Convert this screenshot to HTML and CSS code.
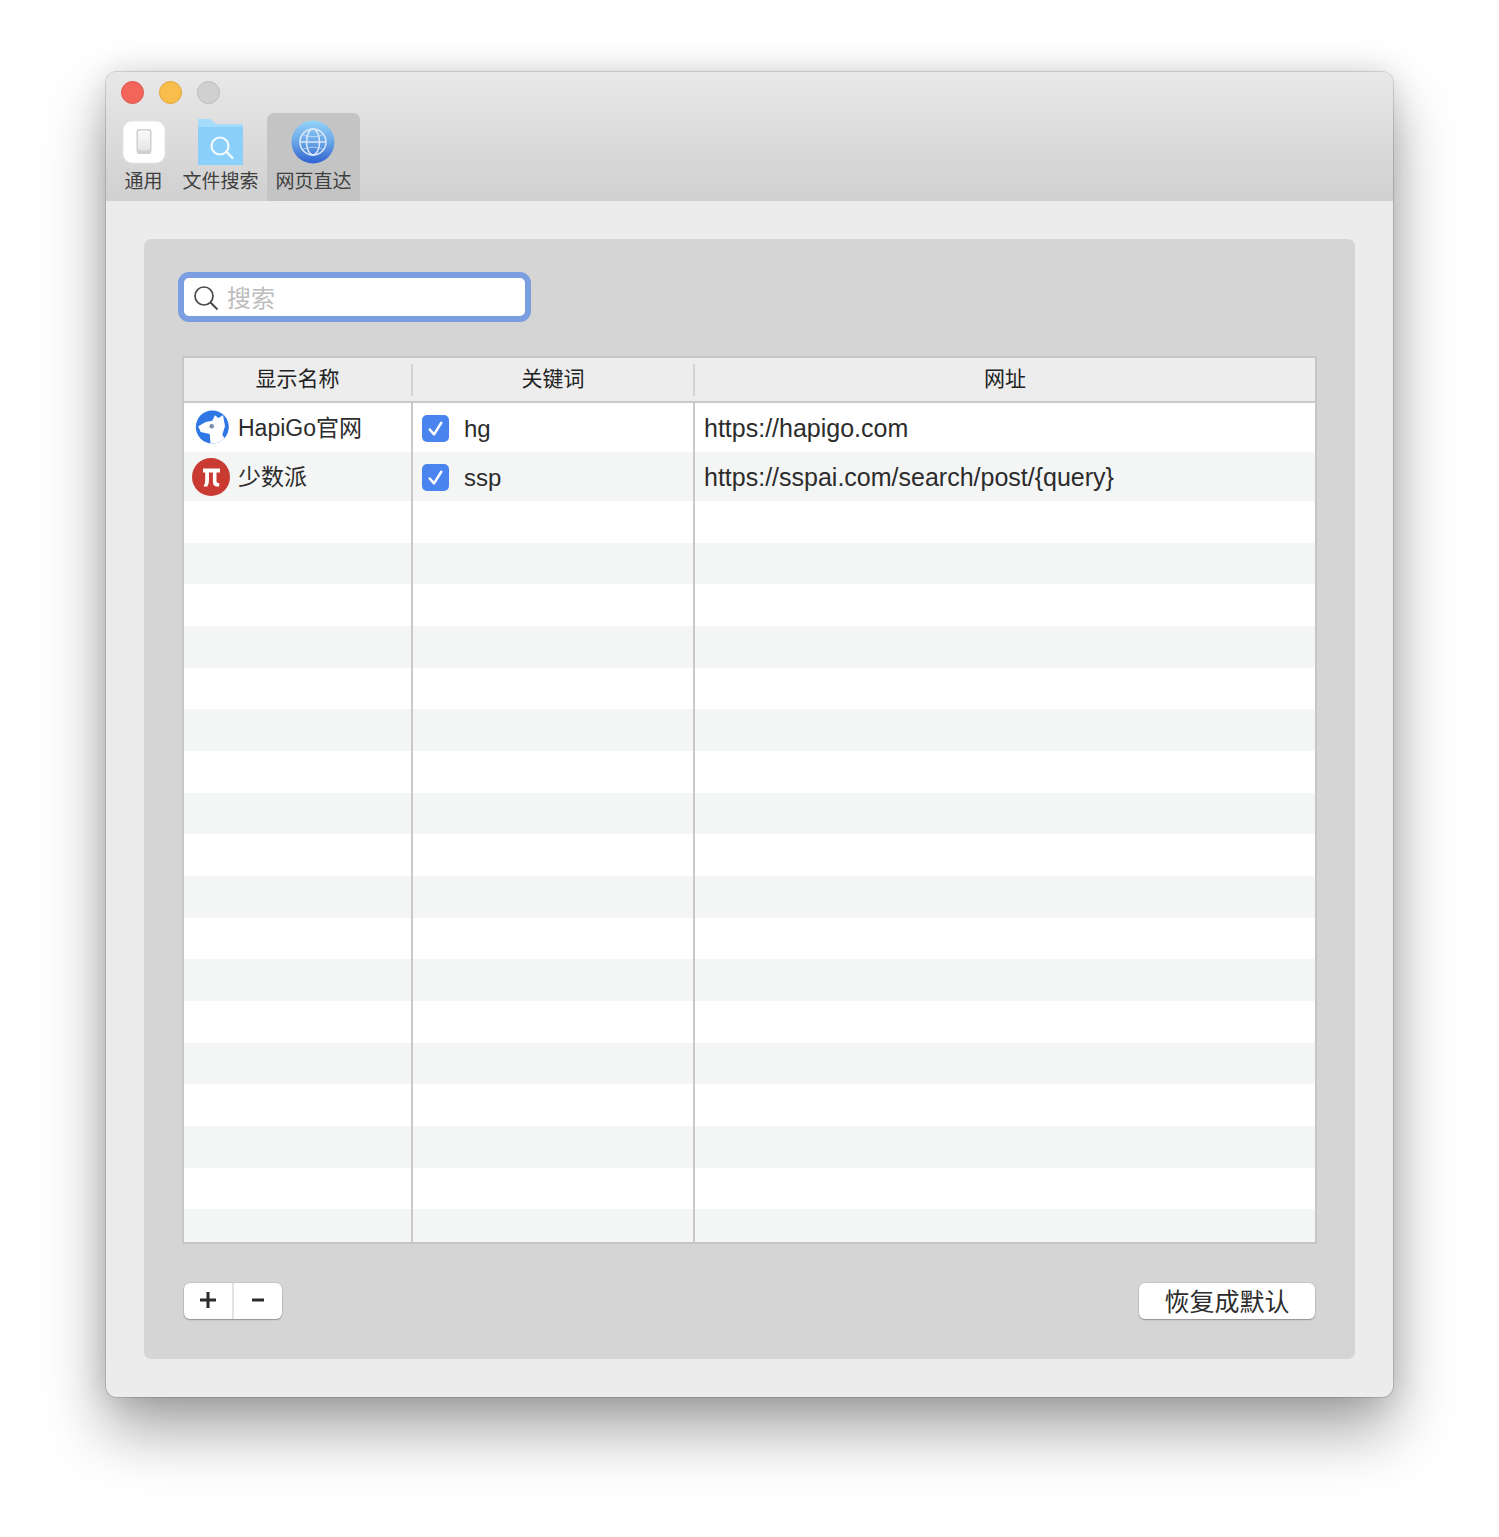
FILE: index.html
```html
<!DOCTYPE html>
<html lang="zh">
<head>
<meta charset="utf-8">
<title>HapiGo</title>
<link rel="stylesheet" href="styles.css">
</head>
<body>
<main class="window">
  <header class="titlebar">
    <div class="lights">
      <span class="light red"></span>
      <span class="light yellow"></span>
      <span class="light gray"></span>
    </div>
    <nav class="tabs">
      <div class="tab tab-general">
        <svg class="tab-icon" width="44" height="44" viewBox="0 0 44 44">
          <defs><linearGradient id="sw" x1="0" y1="0" x2="0" y2="1"><stop offset="0" stop-color="#fbfbfb"/><stop offset="1" stop-color="#e4e4e4"/></linearGradient></defs>
          <rect x="1" y="1" width="42" height="42" rx="9" fill="#fff" stroke="#e6e6e6"/>
          <rect x="14.500" y="9" width="15" height="25" rx="3" fill="#cfcfcf"/>
          <rect x="16" y="10.500" width="12" height="20" rx="2" fill="url(#sw)"/>
        </svg>
        <span>通用</span>
      </div>
      <div class="tab tab-files">
        <svg class="tab-icon" width="45" height="46" viewBox="0 0 45 46">
          <path d="M0 0h11l7 5h27v41H0z" fill="#8ad0fb"/>
          <path d="M0 0h11l7 5h27v3H0z" fill="#a5dcfc"/>
          <circle cx="22" cy="27" r="8.500" fill="none" stroke="#f2fafe" stroke-width="2.200"/>
          <path d="M28.500 33l6 6" stroke="#f2fafe" stroke-width="2.400" stroke-linecap="round"/>
        </svg>
        <span>文件搜索</span>
      </div>
      <div class="tab tab-web">
        <svg class="tab-icon" width="44" height="44" viewBox="0 0 44 44">
          <defs><linearGradient id="gl" x1="0" y1="0" x2="0" y2="1"><stop offset="0" stop-color="#93d3f8"/><stop offset=".5" stop-color="#6aa5e6"/><stop offset="1" stop-color="#2f62d2"/></linearGradient></defs>
          <circle cx="22" cy="22" r="21.500" fill="url(#gl)"/>
          <g fill="none" stroke="#d9e9f9" stroke-width="1.500">
            <circle cx="22" cy="22" r="13"/>
            <ellipse cx="22" cy="22" rx="6.500" ry="13"/>
            <path d="M9 22h26"/>
            <path d="M12 14.500c5 3 15 3 20 0M12 29.500c5 -3 15 -3 20 0" stroke-width="1" stroke-opacity=".7"/>
          </g>
        </svg>
        <span>网页直达</span>
      </div>
    </nav>
  </header>
  <section class="content">
    <div class="panel">
      <div class="search">
        <svg width="26" height="26" viewBox="0 0 26 26">
          <circle cx="11" cy="11" r="9" fill="none" stroke="#4a4a4a" stroke-width="1.700"/>
          <path d="M17.500 17.500l7 7" stroke="#4a4a4a" stroke-width="1.900"/>
        </svg>
        <span class="placeholder">搜索</span>
      </div>
      <div class="table">
        <div class="thead">
          <div class="th">显示名称</div>
          <div class="th">关键词</div>
          <div class="th last">网址</div>
        </div>
        <div class="row first">
          <div class="cell name">
            <svg class="site hapi" width="34" height="34" viewBox="0 0 34 34">
              <defs><clipPath id="hc"><circle cx="17.300" cy="17" r="16.500"/></clipPath></defs>
              <circle cx="17.300" cy="17" r="16.500" fill="#2f77e4"/>
              <g clip-path="url(#hc)">
                <path d="M3.300 16.300L10.700 12L17.300 10.700L20 5.300L23.300 8L28 5.300L30 16.300L27.300 24.700L31.300 31.300L30 36H15.700L14.700 24L5.700 22z" fill="#fff"/>
              </g>
              <circle cx="16.700" cy="16.300" r="2.300" fill="#7d8db2"/>
            </svg>
            <span class="name-text">HapiGo官网</span>
          </div>
          <div class="cell key">
            <span class="check"><svg width="28" height="28" viewBox="0 0 28 28"><path d="M8 14.500l4.500 5L20 7.500" fill="none" stroke="#fff" stroke-width="2.600" stroke-linecap="round" stroke-linejoin="round"/></svg></span>
            <span>hg</span>
          </div>
          <div class="cell url">https://hapigo.com</div>
        </div>
        <div class="row second">
          <div class="cell name">
            <svg class="site pi" width="38" height="38" viewBox="0 0 38 38">
              <circle cx="19" cy="19" r="19" fill="#c93a32"/>
              <path d="M11 10.500h17v4h-3.500v8.500c0 1.300 .6 2 1.800 2h.9v3.500h-2c-3 0 -4.300 -1.800 -4.300 -4.700V14.500h-3.900v7c0 3 -.6 5.300 -1.700 7H11.600c1.100 -2.200 1.600 -4.300 1.600 -7V14.500H11z" fill="#fff"/>
            </svg>
            <span class="name-text">少数派</span>
          </div>
          <div class="cell key">
            <span class="check"><svg width="28" height="28" viewBox="0 0 28 28"><path d="M8 14.500l4.500 5L20 7.500" fill="none" stroke="#fff" stroke-width="2.600" stroke-linecap="round" stroke-linejoin="round"/></svg></span>
            <span>ssp</span>
          </div>
          <div class="cell url">https://sspai.com/search/post/{query}</div>
        </div>
        <div class="filler">
          <div class="cell"></div>
          <div class="cell"></div>
          <div class="cell url"></div>
        </div>
      </div>
      <div class="actions">
        <div class="stepper">
          <span class="step plus">
            <svg width="18" height="18" viewBox="0 0 18 18"><path d="M9 1v16M1 9h16" stroke="#2b2b2b" stroke-width="3"/></svg>
          </span>
          <span class="step minus">
            <svg width="12" height="4" viewBox="0 0 12 4"><path d="M0 2h12" stroke="#2b2b2b" stroke-width="3"/></svg>
          </span>
        </div>
        <div class="reset">恢复成默认</div>
      </div>
    </div>
  </section>
</main>
</body>
</html>
```

FILE: styles.css
```css
* { box-sizing: border-box; }
html, body { margin: 0; height: 100%; }
body {
  background: #fff;
  padding: 72px 106px 0;
  height: 1537px;
  overflow: hidden;
  font-family: "Liberation Sans", "Noto Sans CJK SC", sans-serif;
  color: #2c2c2c;
}
.window {
  width: 1287px;
  height: 1325px;
  border-radius: 11px;
  background: #ececec;
  box-shadow: 0 0 0 1px rgba(0,0,0,.13), 0 33px 62px rgba(0,0,0,.36), 0 0 30px rgba(0,0,0,.13);
  display: flex;
  flex-direction: column;
}
.titlebar {
  height: 129px;
  flex: none;
  border-radius: 11px 11px 0 0;
  background: linear-gradient(#e8e8e8, #d0d0d0);
  position: relative;
  padding-left: 7px;
  display: flex;
  flex-direction: column;
  justify-content: flex-end;
}
.lights {
  position: absolute;
  top: 9px;
  left: 15px;
  display: flex;
  gap: 15px;
}
.light {
  width: 23px;
  height: 23px;
  border-radius: 50%;
  border: 1px solid;
}
.red { background: #f2655a; border-color: #dd5449; }
.yellow { background: #f9bd4c; border-color: #e0a53c; }
.gray { background: #d0d0d0; border-color: #bcbcbc; }
.tabs { display: flex; height: 88px; }
.tab {
  display: flex;
  flex-direction: column;
  align-items: center;
  font-size: 19px;
  line-height: 28px;
  color: #3f3f3f;
  position: relative;
  font-family: "Noto Sans CJK SC", sans-serif;
}
.tab span { position: absolute; bottom: 7px; white-space: nowrap; }
.tab-icon { position: absolute; }
.tab-general { width: 61px; }
.tab-general .tab-icon { top: 7px; }
.tab-files { width: 93px; }
.tab-files .tab-icon { top: 6px; left: 24px; }
.tab-web {
  width: 93px;
  background: #c4c4c4;
  border-radius: 7px 7px 0 0;
}
.tab-web .tab-icon { top: 7px; left: 24px; }
.content { flex: 1; padding: 38px; display: flex; }
.panel {
  flex: 1;
  background: #d5d5d5;
  border-radius: 7px;
  padding: 33px 39px 38px 39px;
  display: flex;
  flex-direction: column;
}
.search {
  width: 353px;
  height: 50px;
  margin-left: -5px;
  border: 6px solid #7a9ee0;
  border-radius: 11px;
  background: #fff;
  display: flex;
  align-items: center;
  padding-left: 9px;
  gap: 8px;
}
.search svg { flex: none; margin-top: 2px; }
.placeholder {
  font-size: 24px;
  line-height: 34px;
  color: #bdbdbd;
  font-family: "Noto Sans CJK SC", sans-serif;
}
.table {
  margin: 34px -1px 0;
  height: 888px;
  border: 2px solid #c6c6c6;
  background: #fff;
  display: flex;
  flex-direction: column;
  overflow: hidden;
}
.thead, .row, .filler {
  display: grid;
  grid-template-columns: 229px 282px 1fr;
}
.thead {
  height: 45px;
  flex: none;
  background: #ededed;
  border-bottom: 2px solid #c9c9c9;
}
.th {
  font-size: 21px;
  line-height: 39px;
  padding-right: 2px;
  text-align: center;
  position: relative;
  font-family: "Noto Sans CJK SC", sans-serif;
  color: #222;
}
.th::after {
  content: "";
  position: absolute;
  right: 0;
  top: 6px;
  bottom: 5px;
  width: 2px;
  background: #d2d2d2;
}
.th.last { padding-right: 0; }
.th.last::after { display: none; }
.row { flex: none; }
.row.first { height: 49px; background: #fff; }
.row.second { height: 49px; background: #f4f5f5; }
.row .key, .row .url { padding-top: 2px; }
.cell {
  border-right: 2px solid #c9c9c9;
  display: flex;
  align-items: center;
  font-size: 24px;
  min-width: 0;
}
.cell.url { border-right: 0; padding-left: 9px; font-size: 25px; }
.filler {
  flex: 1;
  background: repeating-linear-gradient(#fff 0, #fff 41.67px, #f4f5f5 41.67px, #f4f5f5 83.33px);
}
.name { position: relative; padding-left: 54px; white-space: nowrap; }
.name-text { font-size: 23px; margin-top: -3px; }
.site { position: absolute; }
.hapi { left: 11px; top: 7px; }
.pi { left: 8px; top: 6px; }
.key { padding-left: 9px; gap: 15px; }
.check {
  width: 27px;
  height: 27px;
  border-radius: 5px;
  background: #4a84ee;
  display: flex;
  align-items: center;
  justify-content: center;
  flex: none;
}
.actions {
  margin-top: 39px;
  display: flex;
  justify-content: space-between;
  align-items: flex-start;
}
.stepper {
  width: 98px;
  height: 36px;
  margin-left: 1px;
  background: #fff;
  border-radius: 6px;
  box-shadow: 0 1px 1.500px rgba(0,0,0,.28), 0 0 0 1px rgba(0,0,0,.06);
  display: flex;
}
.step { display: flex; align-items: center; justify-content: center; }
.plus { width: 50px; border-right: 2px solid #e2e2e2; }
.plus svg { margin-top: -2px; }
.minus { flex: 1; }
.minus svg { margin-top: -3px; }
.reset {
  width: 176px;
  height: 36px;
  margin-right: 1px;
  background: #fff;
  border-radius: 6px;
  box-shadow: 0 1px 1.500px rgba(0,0,0,.28), 0 0 0 1px rgba(0,0,0,.06);
  font-size: 25px;
  line-height: 35px;
  text-align: center;
  color: #2c2c2c;
  font-family: "Noto Sans CJK SC", sans-serif;
}
```
